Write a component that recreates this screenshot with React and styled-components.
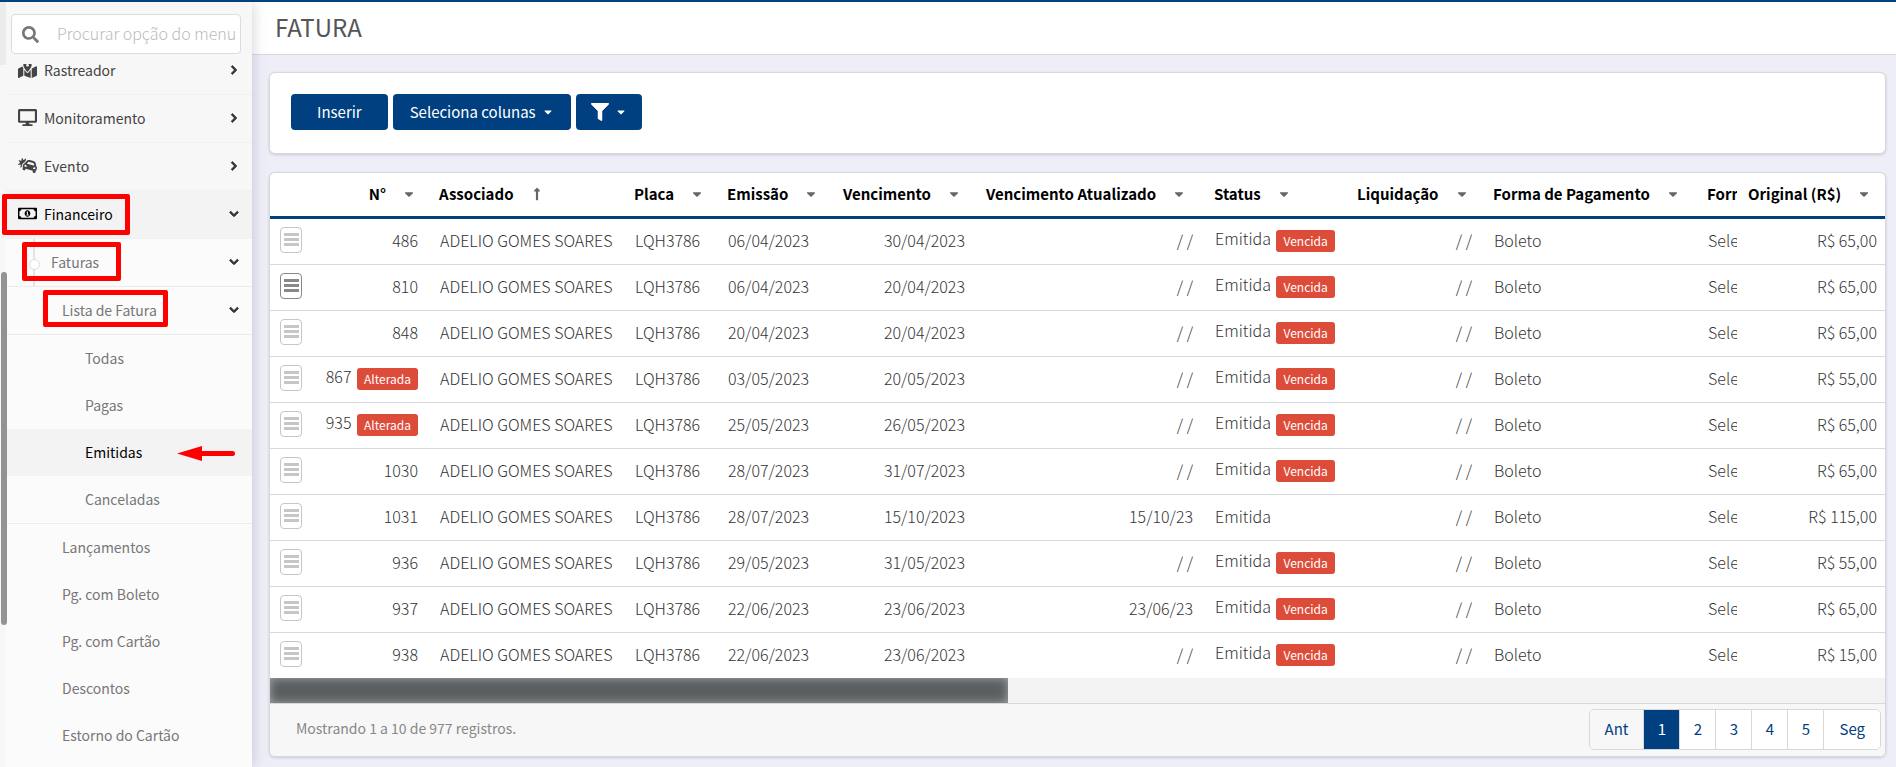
import styled, { createGlobalStyle } from 'styled-components';
import {
  FaSearch,
  FaMapMarkedAlt,
  FaDesktop,
  FaCarCrash,
  FaRegMoneyBillAlt,
  FaChevronRight,
  FaChevronDown,
  FaFilter,
  FaCaretDown,
  FaLongArrowAltUp,
} from 'react-icons/fa';

const columns = [
  { label: '', width: 42 },
  { label: 'N°', width: 116, align: 'right' },
  { label: 'Associado', width: 195, sorted: true },
  { label: 'Placa', width: 93 },
  { label: 'Emissão', width: 116 },
  { label: 'Vencimento', width: 143 },
  { label: 'Vencimento Atualizado', width: 228 },
  { label: 'Status', width: 143 },
  { label: 'Liquidação', width: 136 },
  { label: 'Forma de Pagamento', width: 214 },
  { label: 'Forma', width: 41 },
  { label: 'Original (R$)', width: 148 },
];

const invoices = [
  { id: 486, issued: '06/04/2023', due: '30/04/2023', overdue: true, price: '65,00' },
  { id: 810, issued: '06/04/2023', due: '20/04/2023', overdue: true, price: '65,00', focused: true },
  { id: 848, issued: '20/04/2023', due: '20/04/2023', overdue: true, price: '65,00' },
  { id: 867, changed: true, issued: '03/05/2023', due: '20/05/2023', overdue: true, price: '55,00' },
  { id: 935, changed: true, issued: '25/05/2023', due: '26/05/2023', overdue: true, price: '65,00' },
  { id: 1030, issued: '28/07/2023', due: '31/07/2023', overdue: true, price: '65,00' },
  { id: 1031, issued: '28/07/2023', due: '15/10/2023', updated: '15/10/23', price: '115,00' },
  { id: 936, issued: '29/05/2023', due: '31/05/2023', overdue: true, price: '55,00' },
  { id: 937, issued: '22/06/2023', due: '23/06/2023', updated: '23/06/23', overdue: true, price: '65,00' },
  { id: 938, issued: '22/06/2023', due: '23/06/2023', overdue: true, price: '15,00' },
];

const App = () => {
  return (
    <>
      <GlobalStyle />
      <Page>
        <Sidebar />
        <Main>
          <Header>
            <h1>FATURA</h1>
          </Header>
          <Content>
            <Toolbar>
              <Button $pad={26}>Inserir</Button>
              <Button $pad={17}>
                Seleciona colunas <FaCaretDown size={12} />
              </Button>
              <Button $pad={15} aria-label="Filtro">
                <FaFilter size={18} /> <FaCaretDown size={12} />
              </Button>
            </Toolbar>
            <Invoices />
          </Content>
        </Main>
      </Page>
    </>
  );
};

const Sidebar = () => (
  <Aside>
    <Track>
      <Thumb />
    </Track>
    <Search>
      <FaSearch size={17} />
      <input aria-label="Procurar" placeholder="Procurar opção do menu" />
    </Search>
    <Nav>
      <Menu>
        <Item>
          <Link href="#rastreador"><FaMapMarkedAlt /> Rastreador</Link>
          <FaChevronRight size={10} />
        </Item>
        <Item>
          <Link href="#monitoramento"><FaDesktop /> Monitoramento</Link>
          <FaChevronRight size={10} />
        </Item>
        <Item>
          <Link href="#evento"><FaCarCrash /> Evento</Link>
          <FaChevronRight size={10} />
        </Item>
        <Item $open>
          <Link href="#financeiro"><FaRegMoneyBillAlt /> Financeiro</Link>
          <FaChevronDown size={10} />
          <Frame $left={2} $width={128} $height={41} />
        </Item>
        <Item $level={1}>
          <Branch />
          <Link href="#faturas">Faturas</Link>
          <FaChevronDown size={10} />
          <Frame $left={22} $width={99} $height={39} />
        </Item>
        <Item $level={2} $line>
          <Link href="#lista">Lista de Fatura</Link>
          <FaChevronDown size={10} />
          <Frame $left={43} $width={125} $height={37} />
        </Item>
        <Item $level={3}><Link href="#todas">Todas</Link></Item>
        <Item $level={3}><Link href="#pagas">Pagas</Link></Item>
        <Item $level={3} $active>
          <Link href="#emitidas">Emitidas</Link>
          <Arrow viewBox="0 0 58 16" aria-hidden="true">
            <path d="M0 7.5 25 0v15z" />
            <rect x="22" y="5" width="36" height="5" rx="2.5" />
          </Arrow>
        </Item>
        <Item $level={3} $line><Link href="#canceladas">Canceladas</Link></Item>
        <Item $level={2}><Link href="#lancamentos">Lançamentos</Link></Item>
        <Item $level={2}><Link href="#boleto">Pg. com Boleto</Link></Item>
        <Item $level={2}><Link href="#cartao">Pg. com Cartão</Link></Item>
        <Item $level={2}><Link href="#descontos">Descontos</Link></Item>
        <Item $level={2}><Link href="#estorno">Estorno do Cartão</Link></Item>
      </Menu>
    </Nav>
  </Aside>
);

const Invoices = () => (
  <Panel>
    <Table>
      <colgroup>
        {columns.map((col, i) => (
          <col key={i} width={col.width} />
        ))}
      </colgroup>
      <thead>
        <tr>
          {columns.map((col, i) => (
            <Th key={i} $align={col.align}>
              {col.label}
              {col.sorted && <FaLongArrowAltUp size={14} />}
              {col.label && !col.sorted && <FaCaretDown size={14} />}
            </Th>
          ))}
        </tr>
      </thead>
      <tbody>
        {invoices.map((row) => (
          <tr key={row.id}>
            <Td $menu>
              <RowMenu $focused={row.focused} aria-label="Opções">
                <i />
                <i />
                <i />
              </RowMenu>
            </Td>
            <Td $align="right">
              {row.id} {row.changed && <Badge>Alterada</Badge>}
            </Td>
            <Td>ADELIO GOMES SOARES</Td>
            <Td>LQH3786</Td>
            <Td>{row.issued}</Td>
            <Td $align="right">{row.due}</Td>
            <Td $align="right">{row.updated || '/ /'}</Td>
            <Td>
              Emitida {row.overdue && <Badge>Vencida</Badge>}
            </Td>
            <Td $align="right">/ /</Td>
            <Td>Boleto</Td>
            <Td>Selecione</Td>
            <Td $align="right" $last>R$ {row.price}</Td>
          </tr>
        ))}
      </tbody>
    </Table>
    <Scroll>
      <div />
    </Scroll>
    <Footer>
      <span>Mostrando 1 a 10 de 977 registros.</span>
      <Pages>
        <PageButton $muted>Ant</PageButton>
        <PageButton $number $current>1</PageButton>
        <PageButton $number>2</PageButton>
        <PageButton $number>3</PageButton>
        <PageButton $number>4</PageButton>
        <PageButton $number>5</PageButton>
        <PageButton>Seg</PageButton>
      </Pages>
    </Footer>
  </Panel>
);

const GlobalStyle = createGlobalStyle`
  * {
    box-sizing: border-box;
  }
  body {
    margin: 0;
    background-color: #eeeef9;
  }
  body, button, input {
    font-family: 'Source Sans Pro', 'Noto Sans CJK JP', sans-serif;
    font-size: 15px;
    line-height: 20px;
  }
`;

const Page = styled.div`
  display: flex;
  height: 100vh;
  overflow: hidden;
  border-top: 2px solid #004080;
`;

const Aside = styled.aside`
  position: relative;
  z-index: 1;
  flex: 0 0 252px;
  display: flex;
  flex-direction: column;
  background-color: #f7f7f7;
  box-shadow: 0 0 14px #00003030;
`;

const Track = styled.div`
  position: absolute;
  z-index: 1;
  top: 0;
  bottom: 0;
  left: 0;
  width: 6px;
  background: linear-gradient(#ececec 63px, #f7f7f7 63px);
`;

const Thumb = styled.div`
  position: absolute;
  top: 270px;
  left: 1px;
  width: 6px;
  height: 353px;
  border-radius: 3px;
  background-color: #929494;
`;

const Search = styled.label`
  display: flex;
  align-items: center;
  flex: 0 0 40px;
  margin: 12px 11px 10px;
  padding-left: 10px;
  gap: 18px;
  border: 1px solid #dcdcdc;
  border-radius: 4px;
  background-color: #fff;
  color: #777;
  overflow: hidden;

  svg {
    flex: none;
  }

  input {
    flex: 1;
    min-width: 0;
    padding: 0 0 2px;
    border: 0;
    outline: 0;
    font-size: 16px;
    font-weight: 300;
  }

  input::placeholder {
    color: #bbb;
  }
`;

const Nav = styled.nav`
  flex: 1;
  min-height: 0;
  background-color: #fbfbfb;
  overflow: hidden;
`;

const Menu = styled.ul`
  margin: -17px 0 0;
  padding: 0;
  list-style: none;
`;

const indent = [18, 51, 62, 85];

const Item = styled.li`
  position: relative;
  display: flex;
  align-items: center;
  justify-content: space-between;
  height: ${(p) => (p.$level > 1 && !p.$line ? 47 : 48)}px;
  padding: 0 13px 2px ${(p) => indent[p.$level || 0]}px;
  border-bottom: ${(p) => (p.$level > 1 && !p.$line ? 0 : 1)}px solid ${(p) => (p.$level ? '#ececec' : '#f1f1f1')};
  background-color: ${(p) => (p.$open || p.$active ? '#f3f3f3' : p.$level ? '#fbfbfb' : '#f7f7f7')};
  color: ${(p) => (p.$open || p.$active ? '#000' : p.$level ? '#777' : '#444')};

  & > svg {
    color: #333;
    stroke: currentColor;
    stroke-width: 50px;
  }
`;

const Link = styled.a`
  display: flex;
  align-items: center;
  gap: 7px;
  color: inherit;
  font-size: 14px;
  text-decoration: none;

  svg {
    width: 19px;
    height: 17px;
  }
`;

const Branch = styled.span`
  position: absolute;
  top: 0;
  bottom: 0;
  left: 33px;
  width: 2px;
  background-color: #e4e4e4;

  &::after {
    content: '';
    position: absolute;
    top: 20px;
    left: -4px;
    width: 9px;
    height: 9px;
    border: 1px solid #ddd;
    border-radius: 50%;
    background-color: #fff;
  }
`;

const Frame = styled.span`
  position: absolute;
  z-index: 2;
  top: 3px;
  left: ${(p) => p.$left}px;
  width: ${(p) => p.$width}px;
  height: ${(p) => p.$height}px;
  border: 5px solid #f00;
  border-radius: 2px;
`;

const Arrow = styled.svg`
  position: absolute;
  top: 17px;
  right: 17px;
  width: 58px;
  height: 16px;

  && {
    fill: #f00;
    stroke: none;
  }
`;

const Main = styled.main`
  flex: 1;
  min-width: 0;
`;

const Header = styled.header`
  display: flex;
  align-items: center;
  height: 53px;
  padding: 0 23px 2px;
  border-bottom: 1px solid #d8d8de;
  background-color: #fff;

  h1 {
    margin: 0;
    color: #555;
    font-size: 24px;
    font-weight: 400;
    line-height: 32px;
  }
`;

const Content = styled.div`
  display: flex;
  flex-direction: column;
  gap: 18px;
  padding: 17px 10px 10px 17px;
`;

const Panel = styled.section`
  border: 1px solid #d8d8d8;
  border-radius: 6px;
  background-color: #fff;
  box-shadow: 0 1px 3px #00000026;
  overflow: hidden;
`;

const Toolbar = styled(Panel)`
  display: flex;
  gap: 5px;
  padding: 21px 21px 23px;
`;

const Button = styled.button`
  display: flex;
  align-items: center;
  gap: 6px;
  height: 36px;
  padding: 0 ${(p) => p.$pad}px;
  border: 0;
  border-radius: 4px;
  background-color: #004080;
  color: #fff;
`;

const Table = styled.table`
  width: 100%;
  border-spacing: 0;
  table-layout: fixed;
  color: #333;
`;

const Th = styled.th`
  height: 46px;
  padding: 0 ${(p) => (p.$align ? 12 : 0)}px 2px 11px;
  border-bottom: 3px solid #004080;
  color: #000;
  font-weight: 700;
  text-align: ${(p) => p.$align || 'left'};
  white-space: nowrap;
  overflow: hidden;

  svg {
    margin-left: 16px;
    color: #666;
    vertical-align: -1px;
  }
`;

const Td = styled.td`
  height: 46px;
  padding: 0 ${(p) => (p.$last ? 8 : p.$align ? 10 : 0)}px 3px ${(p) => (p.$menu ? 10 : 12)}px;
  border-bottom: 1px solid #d8d8d8;
  font-size: 16px;
  font-weight: 300;
  text-align: ${(p) => p.$align || 'left'};
  white-space: nowrap;
  overflow: hidden;

  tr:last-child > & {
    height: 45px;
    border-bottom: 0;
  }
`;

const RowMenu = styled.button`
  display: flex;
  flex-direction: column;
  align-items: center;
  justify-content: center;
  gap: 2px;
  width: 22px;
  height: 26px;
  padding: 0 0 2px;
  border: 1px solid;
  border-radius: 4px;
  background-color: #fff;
  color: ${(p) => (p.$focused ? '#888' : '#c6c6c6')};

  i {
    width: 15px;
    height: 3px;
    background-color: currentColor;
  }
`;

const Badge = styled.span`
  display: inline-block;
  height: 22px;
  margin-left: 2px;
  padding: 0 7px;
  border-radius: 3px;
  background-color: #dd4b39;
  color: #fff;
  font-size: 12px;
  font-weight: 400;
  line-height: 21px;
  vertical-align: middle;
`;

const Scroll = styled.div`
  height: 25px;
  background-color: #f3f3f3;

  div {
    width: 45.7%;
    height: 100%;
    background-color: #5a5f61;
    box-shadow: inset 0 0 10px #aaa;
  }
`;

const Footer = styled.footer`
  display: flex;
  align-items: center;
  justify-content: space-between;
  padding: 5px 4px 6px 26px;
  border-top: 1px solid #d8d8d8;
  background-color: #f7f7f7;
  color: #888;
  font-size: 14px;

  span {
    padding-bottom: 4px;
  }
`;

const Pages = styled.div`
  display: flex;
  border: 1px solid #d8d8d8;
  border-radius: 5px;
  background-color: #fff;
  overflow: hidden;
`;

const PageButton = styled.button`
  width: ${(p) => (p.$number ? '36px' : 'auto')};
  height: 39px;
  padding: 0 ${(p) => (p.$number ? 0 : 15)}px 2px;
  border: 0;
  border-right: 1px solid #d8d8d8;
  background-color: ${(p) => (p.$current ? '#004080' : p.$muted ? '#f7f7f7' : '#fff')};
  color: ${(p) => (p.$current ? '#fff' : '#004080')};

  &:last-child {
    border-right: 0;
  }
`;

export default App;
